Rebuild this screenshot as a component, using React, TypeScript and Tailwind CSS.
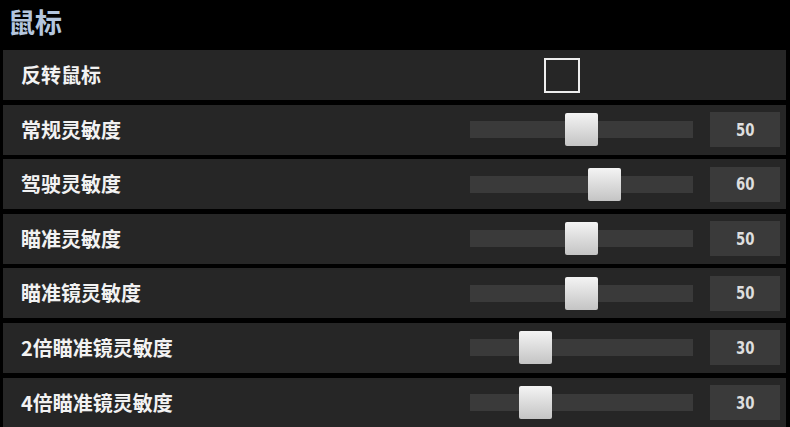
import React from 'react';

interface SliderRow {
  label: string;
  value: number;
}

const sliders: SliderRow[] = [
  { label: '常规灵敏度', value: 50 },
  { label: '驾驶灵敏度', value: 60 },
  { label: '瞄准灵敏度', value: 50 },
  { label: '瞄准镜灵敏度', value: 50 },
  { label: '2倍瞄准镜灵敏度', value: 30 },
  { label: '4倍瞄准镜灵敏度', value: 30 },
];

const cjk = { fontFamily: '"Noto Sans CJK SC", "Noto Sans", sans-serif' };

const Row: React.FC<{ label: string; children: React.ReactNode }> = ({ label, children }) => (
  <div className="h-[50px] shrink-0 bg-[#262626] flex items-center">
    <div className="flex-1 pl-[18px] text-[20px] font-bold text-[#f2f2f2] leading-none" style={cjk}>
      {label}
    </div>
    <div className="w-[316px] flex items-center">{children}</div>
  </div>
);

const App: React.FC = () => {
  return (
    <div className="w-[790px] h-[427px] overflow-hidden bg-black">
      {/* Section title */}
      <div className="h-[50px] pl-[8px] pt-[5px]">
        <span className="text-[27px] font-bold text-[#b4c6de] leading-[34px]" style={cjk}>
          鼠标
        </span>
      </div>

      <div className="flex flex-col gap-[4.6px] pl-[3px] pr-[4px]">
        <Row label="反转鼠标">
          <div className="ml-[74px] w-[36px] h-[35px] border-2 border-[#eeeeee]" />
        </Row>

        {sliders.map((s) => (
          <Row key={s.label} label={s.label}>
            {/* Track */}
            <div className="relative w-[223px] h-[17px] bg-[#3a3a3a]">
              <div
                className="absolute top-[-8px] w-[33px] h-[33px] rounded-[2px] bg-gradient-to-b from-[#f4f4f4] to-[#c4c4c4]"
                style={{ left: `${s.value * 2.3 - 20.5}px` }}
              />
            </div>
            {/* Value box */}
            <div className="ml-[17px] w-[70px] h-[35px] bg-[#3a3a3a] flex items-center justify-center">
              <span
                className="inline-block scale-x-[0.82] text-[18px] font-bold text-[#dedede] leading-none"
                style={{ fontFamily: '"DejaVu Sans Condensed", "Liberation Sans", sans-serif' }}
              >
                {s.value}
              </span>
            </div>
          </Row>
        ))}
      </div>
    </div>
  );
};

export default App;
